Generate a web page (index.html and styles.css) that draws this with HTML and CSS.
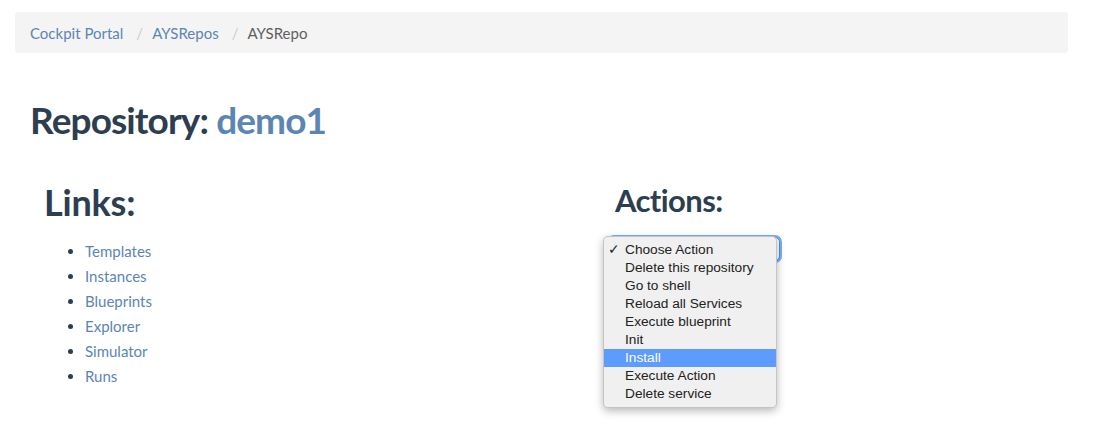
FILE: index.html
```html
<!DOCTYPE html>
<html>
<head>
<meta charset="utf-8">
<link rel="stylesheet" href="styles.css">
</head>
<body>
<div class="page">
  <nav class="breadcrumb">
    <a class="crumb" href="#">Cockpit Portal</a>
    <span class="sep">/</span>
    <a class="crumb" href="#">AYSRepos</a>
    <span class="sep">/</span>
    <span class="crumb active">AYSRepo</span>
  </nav>

  <h1 class="title">Repository: <a href="#" class="repo">demo1</a></h1>

  <div class="cols">
    <section class="col col-links">
      <h2 class="links-h">Links:</h2>
      <ul class="links">
        <li><a href="#">Templates</a></li>
        <li><a href="#">Instances</a></li>
        <li><a href="#">Blueprints</a></li>
        <li><a href="#">Explorer</a></li>
        <li><a href="#">Simulator</a></li>
        <li><a href="#">Runs</a></li>
      </ul>
    </section>
    <section class="col col-actions">
      <h2 class="actions-h">Actions:</h2>
      <div class="select-wrap">
        <div class="select"></div>
        <ul class="menu">
          <li class="item checked"><span class="check">✓</span>Choose Action</li>
          <li class="item">Delete this repository</li>
          <li class="item">Go to shell</li>
          <li class="item">Reload all Services</li>
          <li class="item">Execute blueprint</li>
          <li class="item">Init</li>
          <li class="item hl">Install</li>
          <li class="item">Execute Action</li>
          <li class="item">Delete service</li>
        </ul>
      </div>
    </section>
  </div>
</div>
</body>
</html>
```

FILE: styles.css
```css
html, body {
  margin: 0;
  padding: 0;
  background: #ffffff;
}
body {
  font-family: Lato, "Open Sans", sans-serif;
  font-size: 15px;
  color: #2c3e50;
}
a {
  color: #5b86b4;
  text-decoration: none;
}
.page {
  padding: 12px 26px 60px 15px;
}
.breadcrumb {
  display: flex;
  align-items: center;
  height: 41px;
  padding: 0 15px;
  background: #f4f4f4;
  border-radius: 4px;
  font-size: 15px;
}
.crumb.active {
  color: #5f5f5f;
}
.sep {
  color: #cccccc;
  margin: 0 9px 0 13px;
}
.title {
  margin: 47px 0 0 15px;
  font-size: 37px;
  letter-spacing: -0.9px;
  line-height: 1.1;
  font-weight: 700;
  color: #2c3e50;
}
.repo {
  color: #5b86b4;
}
.cols {
  display: grid;
  grid-template-columns: 572px 1fr;
  margin-top: 42px;
}
.col-links {
  padding-left: 29px;
}
.col-actions {
  padding-left: 16px;
}
.links-h {
  margin: 0;
  font-size: 36px;
  line-height: 1.1;
  font-weight: 700;
  letter-spacing: -0.2px;
}
.actions-h {
  margin: 0 0 0 12px;
  font-size: 31px;
  line-height: 1.1;
  font-weight: 700;
  letter-spacing: -0.6px;
}
.links {
  margin: 17px 0 0 0;
  padding-left: 41px;
}
.links li {
  line-height: 25px;
}
.links li::marker {
  color: #2c3e50;
}
.select-wrap {
  position: relative;
  margin-top: 20px;
  width: 177px;
  height: 26px;
}
.select {
  margin-left: 6px;
  margin-top: 1px;
  width: 169px;
  height: 22px;
  border: 1px solid #4d8ff0;
  border-radius: 5px;
  box-shadow: 0 0 0 2px rgba(80, 145, 240, 0.75);
  background: #ffffff;
}
.menu {
  position: absolute;
  left: 0;
  top: -1px;
  margin: 0;
  padding: 4px 0;
  list-style: none;
  width: 172px;
  background: #f0f0f0;
  border: 1px solid rgba(0, 0, 0, 0.18);
  border-radius: 5px;
  box-shadow: 0 3px 9px rgba(0, 0, 0, 0.28);
  font-family: "Liberation Sans", Arial, sans-serif;
  font-size: 13.7px;
  color: #222222;
}
.item {
  position: relative;
  height: 18px;
  line-height: 18px;
  padding-left: 21px;
  white-space: nowrap;
}
.check {
  position: absolute;
  left: 4px;
  top: 0;
}
.item.hl {
  background: #5d9bfd;
  color: #ffffff;
}
```
